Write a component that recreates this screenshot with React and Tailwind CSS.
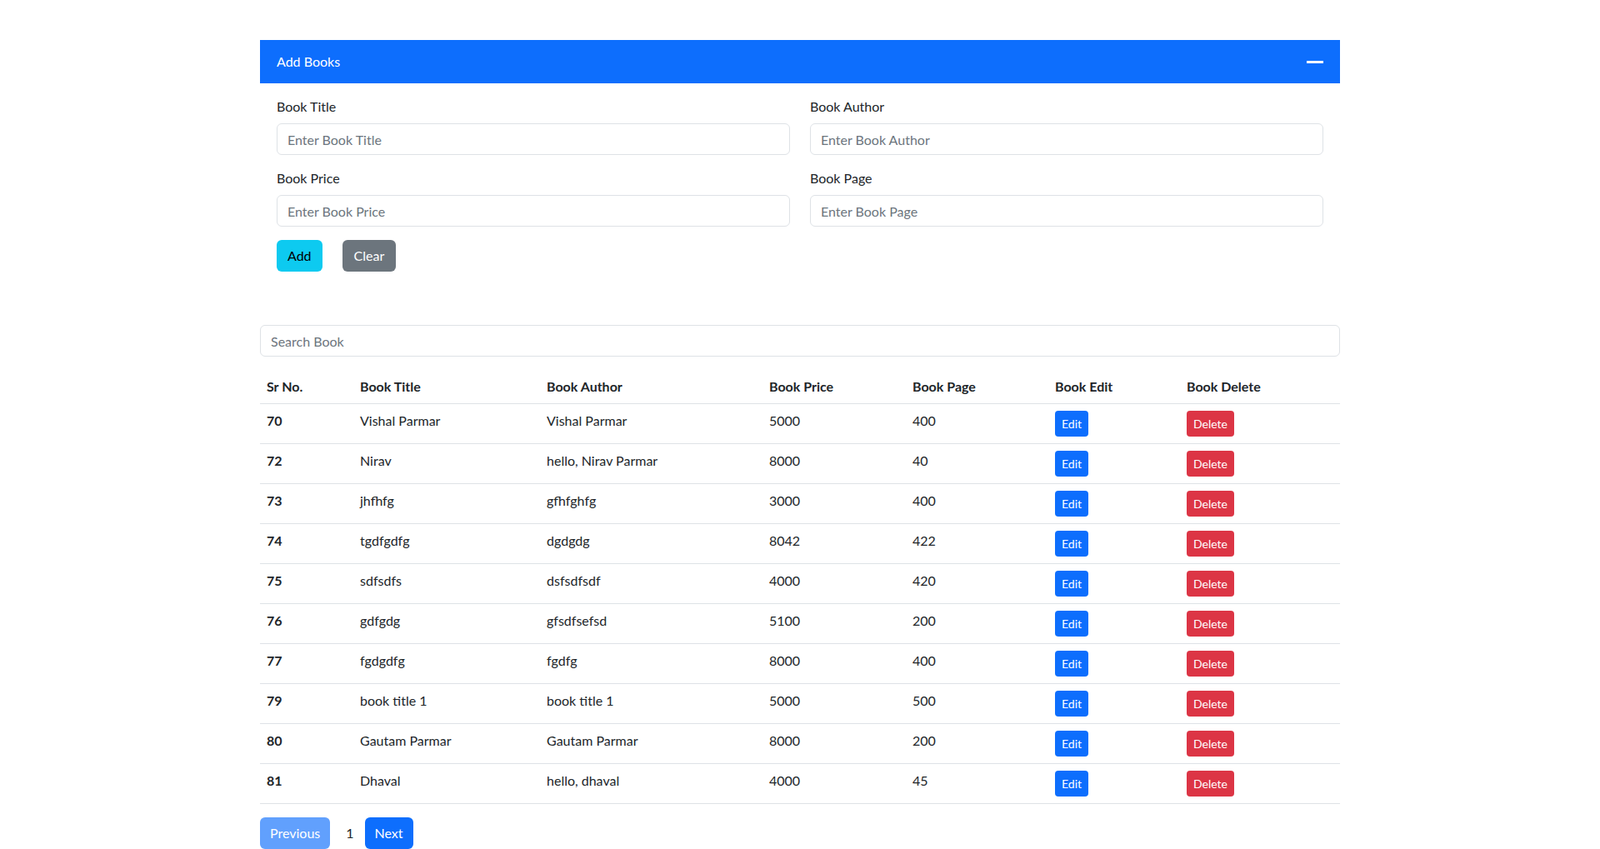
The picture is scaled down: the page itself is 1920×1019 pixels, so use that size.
import React from "react";

const rows = [
  ["70", "Vishal Parmar", "Vishal Parmar", "5000", "400"],
  ["72", "Nirav", "hello, Nirav Parmar", "8000", "40"],
  ["73", "jhfhfg", "gfhfghfg", "3000", "400"],
  ["74", "tgdfgdfg", "dgdgdg", "8042", "422"],
  ["75", "sdfsdfs", "dsfsdfsdf", "4000", "420"],
  ["76", "gdfgdg", "gfsdfsefsd", "5100", "200"],
  ["77", "fgdgdfg", "fgdfg", "8000", "400"],
  ["79", "book title 1", "book title 1", "5000", "500"],
  ["80", "Gautam Parmar", "Gautam Parmar", "8000", "200"],
  ["81", "Dhaval", "hello, dhaval", "4000", "45"],
];

function Field({ label, placeholder }) {
  return (
    <div>
      <label className="block mb-2 leading-6">{label}</label>
      <input
        className="block w-full h-[38px] border border-[#dee2e6] rounded-md px-3 outline-none placeholder:text-[#6c757d]"
        placeholder={placeholder}
      />
    </div>
  );
}

export default function App() {
  return (
    <div
      className="min-h-[1019px] bg-white text-[#212529] text-base"
      style={{ fontFamily: "Lato, 'Liberation Sans', sans-serif" }}
    >
      <div className="w-[1296px] mx-auto pt-[48px]">
        <div className="h-[52px] bg-[#0d6efd] text-white flex items-center justify-between pl-5 pr-5">
          <span className="leading-6">Add Books</span>
          <span className="block w-[20px] h-[3px] bg-white"></span>
        </div>
        <div className="px-5 pt-4">
          <div className="grid grid-cols-2 gap-x-6 gap-y-4">
            <Field label="Book Title" placeholder="Enter Book Title" />
            <Field label="Book Author" placeholder="Enter Book Author" />
            <Field label="Book Price" placeholder="Enter Book Price" />
            <Field label="Book Page" placeholder="Enter Book Page" />
          </div>
          <div className="mt-4 flex gap-6">
            <button className="h-[38px] px-[13px] bg-[#0dcaf0] text-black rounded-md">Add</button>
            <button className="h-[38px] px-[14px] bg-[#6c757d] text-white rounded-md">Clear</button>
          </div>
        </div>

        <input
          className="mt-[64px] block w-full h-[38px] border border-[#dee2e6] rounded-md px-3 outline-none placeholder:text-[#6c757d]"
          placeholder="Search Book"
        />

        <table className="mt-4 w-full border-collapse text-left">
          <thead>
            <tr className="border-b border-[#dee2e6]">
              <th className="w-[112px] px-2 py-2 leading-6 font-bold">Sr No.</th>
              <th className="w-[224px] px-2 py-2 leading-6 font-bold">Book Title</th>
              <th className="w-[267px] px-2 py-2 leading-6 font-bold">Book Author</th>
              <th className="w-[172px] px-2 py-2 leading-6 font-bold">Book Price</th>
              <th className="w-[171px] px-2 py-2 leading-6 font-bold">Book Page</th>
              <th className="w-[158px] px-2 py-2 leading-6 font-bold">Book Edit</th>
              <th className="px-2 py-2 leading-6 font-bold">Book Delete</th>
            </tr>
          </thead>
          <tbody>
            {rows.map((r) => (
              <tr key={r[0]} className="border-b border-[#dee2e6]">
                <td className="px-2 py-2 align-top leading-6 font-bold">{r[0]}</td>
                <td className="px-2 py-2 align-top leading-6">{r[1]}</td>
                <td className="px-2 py-2 align-top leading-6">{r[2]}</td>
                <td className="px-2 py-2 align-top leading-6">{r[3]}</td>
                <td className="px-2 py-2 align-top leading-6">{r[4]}</td>
                <td className="px-2 py-2 align-top">
                  <button className="h-[31px] px-2 text-sm bg-[#0d6efd] text-white rounded-[4px]">Edit</button>
                </td>
                <td className="px-2 py-2 align-top">
                  <button className="h-[31px] px-2 text-sm bg-[#dc3545] text-white rounded-[4px]">Delete</button>
                </td>
              </tr>
            ))}
          </tbody>
        </table>

        <div className="mt-4 flex items-center">
          <button className="h-[38px] px-3 bg-[#0d6efd] opacity-65 text-white rounded-md">Previous</button>
          <span className="ml-[19px] leading-6">1</span>
          <button className="ml-[13px] h-[38px] px-3 bg-[#0d6efd] text-white rounded-md">Next</button>
        </div>
      </div>
    </div>
  );
}
